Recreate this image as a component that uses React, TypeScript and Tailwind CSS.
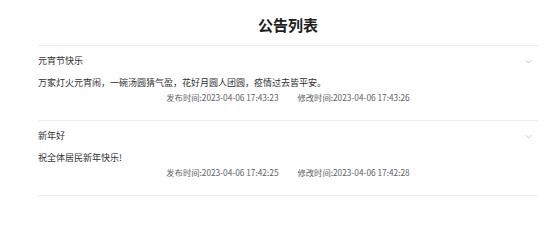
import { useState } from 'react';

interface Notice {
  id: number;
  title: string;
  content: string;
  createTime: string;
  updateTime: string;
}

const notices: Notice[] = [
  {
    id: 1,
    title: '元宵节快乐',
    content: '万家灯火元宵闹，一碗汤圆猜气盈，花好月圆人团圆，疫情过去皆平安。',
    createTime: '2023-04-06 17:43:23',
    updateTime: '2023-04-06 17:43:26',
  },
  {
    id: 2,
    title: '新年好',
    content: '祝全体居民新年快乐!',
    createTime: '2023-04-06 17:42:25',
    updateTime: '2023-04-06 17:42:28',
  },
];

const font = { fontFamily: '"Noto Sans CJK SC", "Noto Sans", sans-serif' };

const Chevron = ({ open }: { open: boolean }) => (
  <svg
    viewBox="0 0 12 12"
    className={open ? 'h-[7px] w-[7px] text-[#a8abb2]' : 'h-[7px] w-[7px] -rotate-90 text-[#a8abb2]'}
    fill="none"
    stroke="currentColor"
    strokeWidth={1.2}
  >
    <path d="M1.5 4l4.5 4.5L10.5 4" />
  </svg>
);

export default function App() {
  const [opened, setOpened] = useState<number[]>([1, 2]);

  const toggle = (id: number) => {
    setOpened(prev => (prev.includes(id) ? prev.filter(x => x !== id) : [...prev, id]));
  };

  return (
    <div className="h-[220px] w-[560px] bg-white" style={font}>
      <div className="ml-[38px] w-[500px]">
        {/* 标题 */}
        <h1 className="pt-[15px] pb-[10px] text-center text-[15px] font-bold leading-[20px] text-[#1f1f1f]">
          公告列表
        </h1>

        {/* 公告列表 */}
        <div className="border-b border-[#ebeef5]">
          {notices.map(item => {
            const open = opened.includes(item.id);
            return (
              <div key={item.id} className="border-t border-[#ebeef5]">
                <button
                  className="flex h-[30px] w-full items-center justify-between text-left text-[9px] text-[#303133]"
                  onClick={() => toggle(item.id)}
                >
                  <span>{item.title}</span>
                  <span className="mr-[6px]">
                    <Chevron open={open} />
                  </span>
                </button>
                {open && (
                  <div className="pb-[16px] text-[9px] leading-[14px] text-[#303133]">
                    <p>{item.content}</p>
                    <p className="text-center text-[8.3px] text-[#606266]">
                      发布时间:{item.createTime}
                      <span className="inline-block w-[19px]" />
                      修改时间:{item.updateTime}
                    </p>
                  </div>
                )}
              </div>
            );
          })}
        </div>
      </div>
    </div>
  );
}
